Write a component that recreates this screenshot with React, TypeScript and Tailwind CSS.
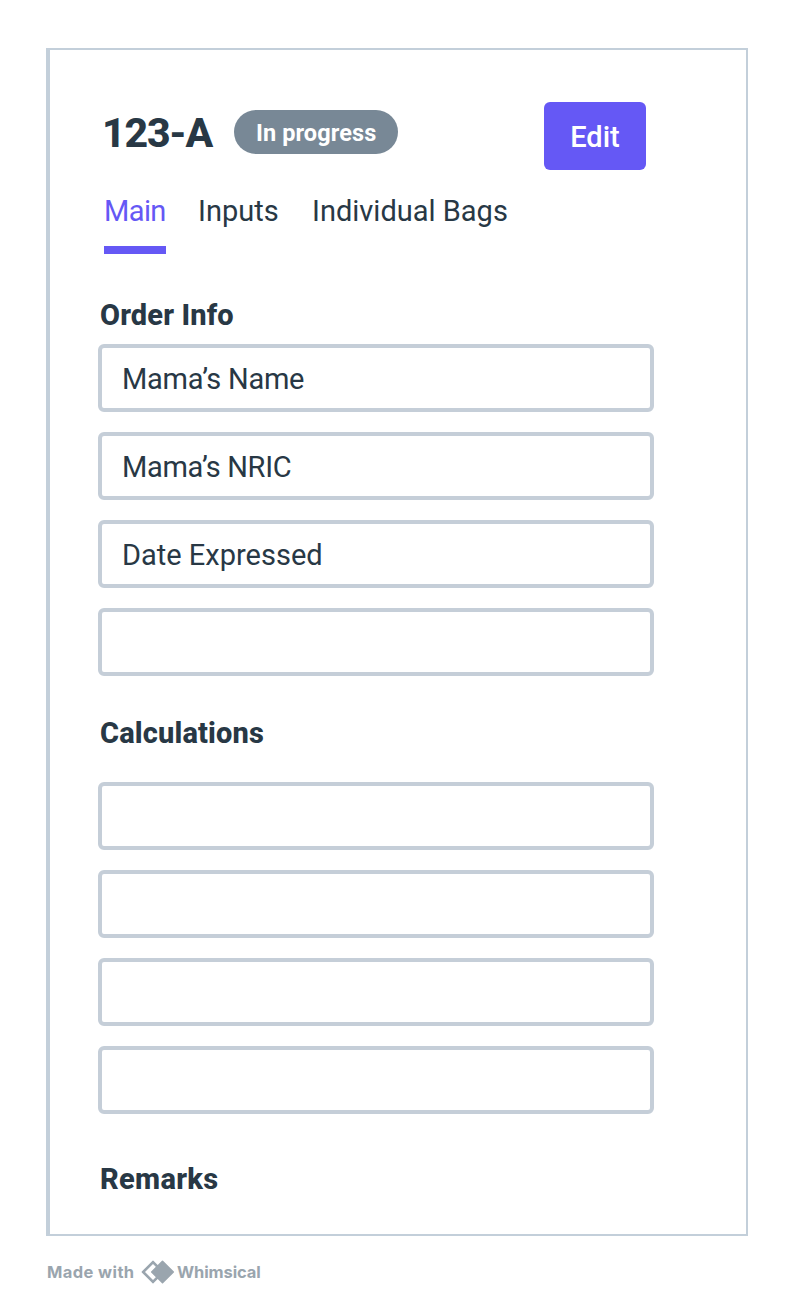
import React from "react";

type FieldProps = { children?: React.ReactNode };

function Field({ children }: FieldProps) {
  return (
    <div className="flex h-[68px] w-[556px] items-center rounded-[6px] border-4 border-[#c5ced8] pt-px pl-5 text-[29px] leading-8 font-[450]">
      {children}
    </div>
  );
}

function Heading({ children }: { children: React.ReactNode }) {
  return (
    <h2 className="flex h-8 items-center pl-[2px] text-[29px] leading-8 font-extrabold tracking-[0.15px]">
      {children}
    </h2>
  );
}

export default function App() {
  return (
    <div className="flex h-[1308px] w-[796px] flex-col bg-white pt-12 pl-[46px] font-['Roboto','Liberation_Sans',sans-serif] text-[#283845]">
      <main className="flex h-[1188px] w-[702px] flex-col border-2 border-l-4 border-[#c3cfda] pt-[52px] pl-12">
        <header className="flex h-[68px] pl-[4px]">
          <h1 className="w-[132px] pt-[6px] text-[41px] leading-[50px] font-extrabold whitespace-nowrap">
            <span className="tracking-[-1.2px]">123-A</span>
          </h1>
          <div className="mt-2 flex h-11 w-[164px] items-center rounded-full bg-[#788896] pt-[2px] pl-[22px] text-[23.5px] leading-7 font-bold whitespace-nowrap text-white">
            <span className="tracking-[0.1px]">In progress</span>
          </div>
          <button className="ml-[146px] flex h-[68px] w-[102px] items-center justify-center rounded-[6px] bg-[#6558f5] pt-px text-[29px] leading-8 font-medium text-white">
            <span>Edit</span>
          </button>
        </header>

        <nav className="flex h-[84px] gap-8 pl-[6px] text-[29px] leading-8 font-[450] whitespace-nowrap">
          <a className="w-[62px] border-b-8 border-[#6558f5] pt-[25px] text-[#6558f5]">
            <span className="tracking-[-0.6px]">Main</span>
          </a>
          <a className="w-[82px] pt-[25px]">
            <span>Inputs</span>
          </a>
          <a className="pt-[25px]">
            <span>Individual Bags</span>
          </a>
        </nav>

        <section className="mt-[45px] flex flex-col">
          <Heading>
            <span>Order Info</span>
          </Heading>
          <div className="mt-[13px] flex flex-col gap-5">
            <Field>
              <span className="tracking-[-0.25px]">Mama’s Name</span>
            </Field>
            <Field>
              <span className="tracking-[-0.35px]">Mama’s NRIC</span>
            </Field>
            <Field>
              <span>Date Expressed</span>
            </Field>
            <Field />
          </div>
        </section>

        <section className="mt-[41px] flex flex-col">
          <Heading>
            <span>Calculations</span>
          </Heading>
          <div className="mt-[33px] flex flex-col gap-5">
            <Field />
            <Field />
            <Field />
            <Field />
          </div>
        </section>

        <section className="mt-[49px]">
          <Heading>
            <span className="tracking-[0.3px]">Remarks</span>
          </Heading>
        </section>
      </main>

      <footer className="mt-6 flex h-6 items-center font-['Inter','Liberation_Sans',sans-serif] text-[16.5px] leading-6 font-bold whitespace-nowrap text-[#9aa5ae]">
        <span className="w-[95px] pl-px">
          <span className="tracking-[0.4px]">Made with</span>
        </span>
        <svg className="h-6 w-[34px] shrink-0" viewBox="0 0 34 24" aria-hidden="true">
          <path
            d="M12 1.2 L22.8 12 L12 22.8 L1.2 12 Z"
            fill="#9aa5ae"
            stroke="#9aa5ae"
            strokeWidth="1.2"
            strokeLinejoin="round"
          />
          <path d="M12 4 L14.5 6.5 L20 12 L14.5 17.5 L12 20 L4 12 Z" fill="#ffffff" />
          <path
            d="M21.5 1.2 L32.3 12 L21.5 22.8 L10.7 12 Z"
            fill="#9aa5ae"
            stroke="#9aa5ae"
            strokeWidth="1.5"
            strokeLinejoin="round"
          />
        </svg>
        <span className="pl-[2px]">
          <span className="tracking-[-0.1px]">Whimsical</span>
        </span>
      </footer>
    </div>
  );
}
